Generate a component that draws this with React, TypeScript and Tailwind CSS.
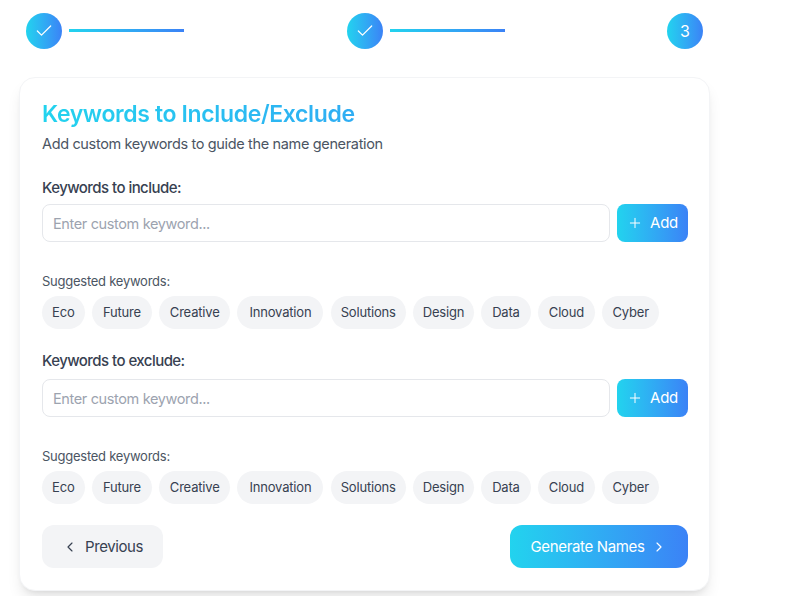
import { Check, ChevronLeft, ChevronRight, Plus } from "lucide-react";

const keywords = [
  { text: "Eco", width: "w-[42.7px]" },
  { text: "Future", width: "w-[60px]" },
  { text: "Creative", width: "w-[71px]" },
  { text: "Innovation", width: "w-[86px]" },
  { text: "Solutions", width: "w-[75px]" },
  { text: "Design", width: "w-[61px]" },
  { text: "Data", width: "w-[49.5px]" },
  { text: "Cloud", width: "w-[57px]" },
  { text: "Cyber", width: "w-[57px]" },
];

function Circle({ children }: { children: React.ReactNode }) {
  return (
    <div className="flex h-9 w-9 shrink-0 items-center justify-center rounded-full bg-gradient-to-r from-[#22d3ee] to-[#3b82f6] text-[16px] text-white">
      {children}
    </div>
  );
}

function Step() {
  return (
    <div className="flex flex-1 items-center">
      <Circle>
        <Check size={20} strokeWidth={1.5} />
      </Circle>
      <div className="mb-[2px] ml-[7px] h-[3px] w-[115px] bg-gradient-to-r from-[#22d3ee] to-[#3b82f6]" />
    </div>
  );
}

function KeywordBlock({ label, mt, gap }: { label: string; mt: string; gap: string }) {
  return (
    <section className={mt}>
      <div className="text-[15px] font-medium leading-[20px] tracking-[-0.55px] text-[#374151]">{label}</div>
      <div className={`${gap} flex gap-[7px]`}>
        <input
          placeholder="Enter custom keyword..."
          className="h-[38px] min-w-0 flex-1 rounded-lg border border-[#e5e7eb] bg-white px-[10px] text-[14.5px] tracking-[-0.37px] text-[#374151] outline-none placeholder:text-[#9ca3af]"
        />
        <button className="flex h-[38px] w-[71px] items-center justify-center gap-[7px] rounded-lg bg-gradient-to-r from-[#22d3ee] to-[#3b82f6] text-[15px] tracking-[-0.3px] text-white">
          <Plus size={16} strokeWidth={1.5} />
          <span className="mt-px">Add</span>
        </button>
      </div>
      <div className="mt-[30px] text-[13px] leading-[18px] tracking-[-0.25px] text-[#4b5563]">Suggested keywords:</div>
      <div className="mt-[6px] flex gap-[7.25px]">
        {keywords.map((k) => (
          <span
            key={k.text}
            className={`${k.width} flex h-[33px] items-center justify-center rounded-full bg-[#f3f4f6] text-[13px] tracking-[-0.19px] text-[#374151]`}
          >
            {k.text}
          </span>
        ))}
      </div>
    </section>
  );
}

export default function App() {
  return (
    <div className="h-[596px] w-[808px] overflow-hidden bg-white pl-[19px] font-['Inter',sans-serif]">
      <div className="w-[691px]">
        <div className="flex items-center pl-[7px] pr-[7px] pt-[13px]">
          <Step />
          <Step />
          <Circle>3</Circle>
        </div>
        <div className="mt-[28px] h-[514px] rounded-2xl border border-[#f3f4f6] bg-white pl-[22px] pr-[21px] pt-[22px] shadow-lg">
          <h1 className="bg-gradient-to-r from-[#22d3ee] to-[#3b82f6] bg-clip-text text-[23px] font-semibold leading-[28px] tracking-[-0.37px] text-transparent">
            Keywords to Include/Exclude
          </h1>
          <p className="mt-[6px] text-[14.5px] leading-[20px] tracking-[-0.35px] text-[#4b5563]">
            Add custom keywords to guide the name generation
          </p>
          <KeywordBlock label="Keywords to include:" mt="mt-[24px]" gap="mt-[6px]" />
          <KeywordBlock label="Keywords to exclude:" mt="mt-[22px]" gap="mt-[8px]" />
          <div className="mt-[21px] flex justify-between">
            <button className="flex h-[43px] w-[121px] items-center justify-center gap-[7px] rounded-xl bg-[#f3f4f6] text-[15px] tracking-[-0.4px] text-[#374151]">
              <ChevronLeft size={16} strokeWidth={1.75} />
              <span className="mt-px">Previous</span>
            </button>
            <button className="flex h-[43px] w-[178px] items-center justify-center gap-[7px] rounded-xl bg-gradient-to-r from-[#22d3ee] to-[#3b82f6] text-[15px] tracking-[-0.35px] text-white">
              <span className="mt-px">Generate Names</span>
              <ChevronRight size={16} strokeWidth={1.75} />
            </button>
          </div>
        </div>
      </div>
    </div>
  );
}
